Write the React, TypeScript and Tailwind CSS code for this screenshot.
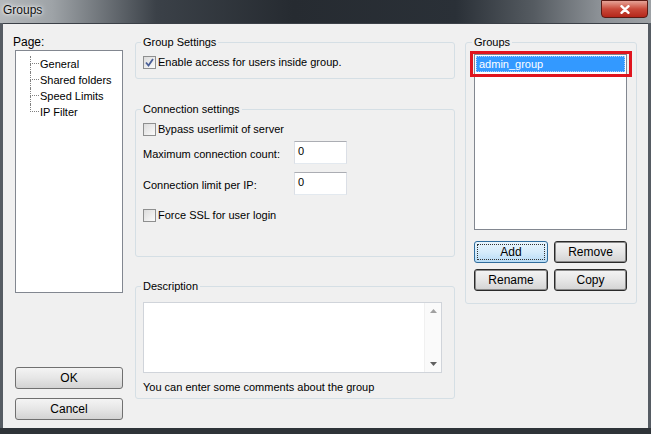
import React from "react";

const font = { fontFamily: '"Liberation Sans", Arial, sans-serif' };

function CheckBox({ checked }: { checked?: boolean }) {
  return (
    <div className="w-[13px] h-[13px] border border-[#8e8f8f] bg-gradient-to-br from-[#dcdcdc] to-[#fbfbfb] flex items-center justify-center shrink-0">
      {checked && (
        <svg width="11" height="11" viewBox="0 0 11 11">
          <path d="M2 5.5 L4.5 8.5 L9 2" fill="none" stroke="#4a5f97" strokeWidth="1.8" />
        </svg>
      )}
    </div>
  );
}

function WinButton({ label, w, focused, dark }: { label: string; w: string; focused?: boolean; dark?: boolean }) {
  if (focused) {
    return (
      <div className={`${w} h-[22px] rounded-[3px] border border-[#2f6c9c] bg-gradient-to-b from-[#e9f5fd] via-[#d6ecfb] to-[#b8dcf6] p-[2px] shrink-0`}>
        <div className="h-full w-full border border-dotted border-[#333] flex items-center justify-center text-[12px] text-black">
          {label}
        </div>
      </div>
    );
  }
  return (
    <div
      className={`${w} h-[22px] rounded-[3px] border ${dark ? "border-[#2a2a2a] ring-1 ring-inset ring-[#8a8a8a]" : "border-[#707070]"} bg-gradient-to-b from-[#f4f4f4] via-[#e6e6e6] to-[#d3d3d3] flex items-center justify-center text-[12px] text-black shrink-0`}
    >
      {label}
    </div>
  );
}

function NumInput() {
  return (
    <div className="w-[53px] h-[23px] border border-t-[#abadb3] border-l-[#dbdfe6] border-r-[#dbdfe6] border-b-[#e3e9ef] bg-white pl-[3px] pt-[3px] text-[11px] leading-[13px]">
      0
    </div>
  );
}

function TreeItem({ label, last }: { label: string; last?: boolean }) {
  return (
    <div className="flex h-[16px]">
      <div className="w-[9px] flex flex-col shrink-0">
        <div className="h-[8px] border-l border-b border-dotted border-[#808080]" />
        <div className={`h-[8px] ${last ? "" : "border-l border-dotted border-[#808080]"}`} />
      </div>
      <div className="pl-[1px] text-[11px] leading-[16px] text-black whitespace-nowrap">{label}</div>
    </div>
  );
}

export default function App() {
  return (
    <div
      className="w-[651px] h-[434px] flex flex-col bg-[#565c63] overflow-hidden select-none"
      style={font}
    >
      {/* Title bar */}
      <div className="relative h-[23px] shrink-0 bg-[linear-gradient(90deg,#b4b8bb_0%,#9ea3a7_8%,#3b4148_24%,#262b31_45%,#2a3037_70%,#555b61_82%,#8c9196_92%,#9da1a5_100%)]">
        <div className="pl-[3px] pt-[3px] text-[12px] leading-[15px] text-[#111] [text-shadow:0_0_6px_#ffffff,0_0_3px_#ffffff]">
          Groups
        </div>
        <div className="absolute right-[3px] top-0 w-[47px] h-[18px] rounded-b-[4px] border border-[#5a1a14] bg-gradient-to-b from-[#e5a297] via-[#c9493a] to-[#b4261a] flex items-center justify-center">
          <svg width="10" height="9" viewBox="0 0 10 9">
            <path d="M1.5 1.2 L8.5 7.8 M8.5 1.2 L1.5 7.8" stroke="#ffffff" strokeWidth="2.4" strokeLinecap="round" />
          </svg>
        </div>
      </div>

      {/* Client area */}
      <div className="mx-[3px] h-[405px] shrink-0 border-t border-[#3b4047] bg-[#f0f0f0] flex pl-[12px] pt-[12px] text-black">
        {/* Left column */}
        <div className="w-[108px] flex flex-col shrink-0">
          <div className="text-[12px] leading-[13px] -ml-[2px]">Page:</div>
          <div className="mt-[1px] h-[243px] border border-[#828790] bg-white pt-[5px] pl-[14px]">
            <TreeItem label="General" />
            <TreeItem label="Shared folders" />
            <TreeItem label="Speed Limits" />
            <TreeItem label="IP Filter" last />
          </div>
          <div className="mt-[74px]">
            <WinButton label="OK" w="w-[108px]" />
          </div>
          <div className="mt-[9px]">
            <WinButton label="Cancel" w="w-[108px]" />
          </div>
        </div>

        {/* Middle column */}
        <div className="ml-[12px] w-[320px] flex flex-col shrink-0">
          <fieldset className="h-[43px] border border-[#d5dfe5] rounded-[3px] px-[7px]">
            <legend className="text-[11px] leading-[13px] px-[2px] -ml-[2px]">Group Settings</legend>
            <div className="mt-[6px] flex items-center gap-[2px] h-[14px]">
              <CheckBox checked />
              <span className="text-[11px] leading-[14px]">Enable access for users inside group.</span>
            </div>
          </fieldset>

          <fieldset className="mt-[24px] h-[154px] border border-[#d5dfe5] rounded-[3px] px-[7px]">
            <legend className="text-[11px] leading-[13px] px-[2px] -ml-[2px]">Connection settings</legend>
            <div className="mt-[6px] flex items-center gap-[2px] h-[14px]">
              <CheckBox />
              <span className="text-[11px] leading-[14px]">Bypass userlimit of server</span>
            </div>
            <div className="mt-[5px] flex items-center h-[23px]">
              <span className="w-[151px] text-[11px] leading-[14px] pt-[2px]">Maximum connection count:</span>
              <NumInput />
            </div>
            <div className="mt-[8px] flex items-center h-[23px]">
              <span className="w-[151px] text-[11px] leading-[14px] pt-[2px]">Connection limit per IP:</span>
              <NumInput />
            </div>
            <div className="mt-[13px] flex items-center gap-[2px] h-[14px]">
              <CheckBox />
              <span className="text-[11px] leading-[14px]">Force SSL for user login</span>
            </div>
          </fieldset>

          <fieldset className="mt-[23px] h-[119px] border border-[#d5dfe5] rounded-[3px] px-[7px]">
            <legend className="text-[11px] leading-[13px] px-[2px] -ml-[2px]">Description</legend>
            <div className="mt-[9px] w-[299px] h-[71px] border border-[#d0d4da] bg-white flex justify-end">
              <div className="w-[17px] h-full bg-[#fafafa] border-l border-[#f0f0f0] flex flex-col items-center justify-between py-[6px]">
                <svg width="7" height="4" viewBox="0 0 7 4">
                  <path d="M0 4 L3.5 0 L7 4 Z" fill="#a0a0a0" />
                </svg>
                <svg width="7" height="4" viewBox="0 0 7 4">
                  <path d="M0 0 L3.5 4 L7 0 Z" fill="#606060" />
                </svg>
              </div>
            </div>
            <div className="mt-[8px] text-[11px] leading-[13px]">You can enter some comments about the group</div>
          </fieldset>
        </div>

        {/* Right column */}
        <div className="ml-[10px] w-[172px] shrink-0">
          <fieldset className="relative h-[268px] border border-[#d5dfe5] rounded-[3px] pl-[8px] pr-[9px]">
            <legend className="text-[11px] leading-[13px] px-[2px] -ml-[2px]">Groups</legend>
            <div className="mt-[5px] w-[153px] h-[176px] border border-[#828790] bg-white p-[1px]">
              <div className="h-[16px] bg-[#3399ff] text-white text-[11px] leading-[14px] pl-[2px] border border-dotted border-[#a9d2ff]">
                admin_group
              </div>
            </div>
            <div className="absolute left-[4px] top-[2px] w-[162px] h-[26px] border-[3px] border-[#e0141e] pointer-events-none" />
            <div className="mt-[11px] flex gap-[6px]">
              <WinButton label="Add" w="w-[74px]" focused />
              <WinButton label="Remove" w="w-[73px]" dark />
            </div>
            <div className="mt-[6px] flex gap-[6px]">
              <WinButton label="Rename" w="w-[74px]" dark />
              <WinButton label="Copy" w="w-[73px]" dark />
            </div>
          </fieldset>
        </div>
      </div>
      <div className="flex-1 bg-[#2e3338]" />
    </div>
  );
}
